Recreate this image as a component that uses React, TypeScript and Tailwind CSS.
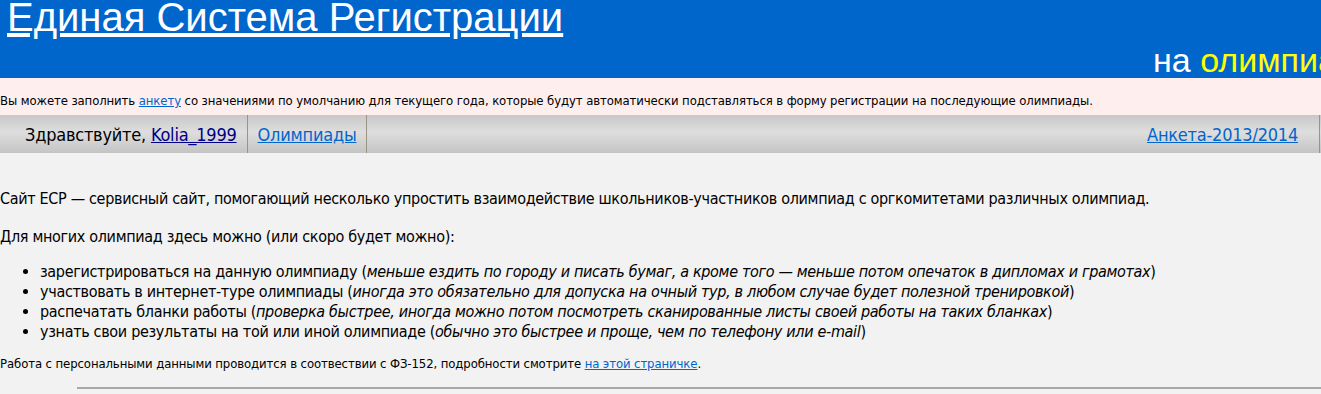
export default function App() {
  const body = "font-['DejaVu_Sans_Condensed','DejaVu_Sans',sans-serif]"
  return (
    <div className={`min-h-[394px] bg-[#f2f2f2] text-black ${body} overflow-hidden`}>
      {/* header */}
      <div className="h-[78px] bg-[#0066cc] font-['Liberation_Sans',Arial,sans-serif] text-white overflow-hidden">
        <div className="pl-[7px] pt-[1px] leading-[32px] text-[40px]">
          <a href="#" className="underline">Единая Система Регистрации</a>
        </div>
        <div className="pl-[1153px] leading-[34px] text-[34px] whitespace-nowrap mt-[10px]">
          на <span className="text-[#ffff00]">олимпиады</span>
        </div>
      </div>

      {/* notice */}
      <div className="h-[37px] bg-[#ffeeee] pt-[15px] text-[13px] leading-[16px] tracking-[-0.1px] whitespace-nowrap">
        Вы можете заполнить <a href="#" className="text-[#0066cc] underline">анкету</a> со значениями по умолчанию для текущего года, которые будут автоматически подставляться в форму регистрации на последующие олимпиады.
      </div>

      {/* nav */}
      <div className="h-[38px] flex items-stretch text-[18px] tracking-[-0.22px] bg-[linear-gradient(to_bottom,#c8c8c8,#dedede_45%,#c4c4c4)]">
        <div className="flex items-center pl-[25px] pr-[10px] border-r border-[#9b9383]">
          Здравствуйте,&nbsp;<a href="#" className="text-[#000088] underline">Kolia_1999</a>
        </div>
        <div className="flex items-center px-[10px] border-r border-[#9b9383]">
          <a href="#" className="text-[#0066cc] underline">Олимпиады</a>
        </div>
        <div className="flex-1" />
        <div className="flex items-center pl-[10px] pr-[21px] border-r border-[#9b9383] mr-[1px]">
          <a href="#" className="text-[#0066cc] underline">Анкета-2013/2014</a>
        </div>
      </div>

      {/* content */}
      <div className="text-[16px] leading-[20px] tracking-[-0.32px]">
        <p className="mt-[36px]">
          Сайт ЕСР — сервисный сайт, помогающий несколько упростить взаимодействие школьников-участников олимпиад с оргкомитетами различных олимпиад.
        </p>
        <p className="mt-[18px]">Для многих олимпиад здесь можно (или скоро будет можно):</p>
        <ul className="mt-[15px] list-disc pl-[40px]">
          <li>зарегистрироваться на данную олимпиаду (<i>меньше ездить по городу и писать бумаг, а кроме того — меньше потом опечаток в дипломах и грамотах</i>)</li>
          <li>участвовать в интернет-туре олимпиады (<i>иногда это обязательно для допуска на очный тур, в любом случае будет полезной тренировкой</i>)</li>
          <li>распечатать бланки работы (<i>проверка быстрее, иногда можно потом посмотреть сканированные листы своей работы на таких бланках</i>)</li>
          <li>узнать свои результаты на той или иной олимпиаде (<i>обычно это быстрее и проще, чем по телефону или e-mail</i>)</li>
        </ul>
        <p className="mt-[14px] text-[13px] leading-[16px] tracking-[-0.1px]">
          Работа с персональными данными проводится в соотвествии с ФЗ-152, подробности смотрите <a href="#" className="text-[#0066cc] underline">на этой страничке</a>.
        </p>
        <hr className="mt-[15px] ml-[77px] border-t-2 border-[#a8a8a8]" />
      </div>
    </div>
  )
}
